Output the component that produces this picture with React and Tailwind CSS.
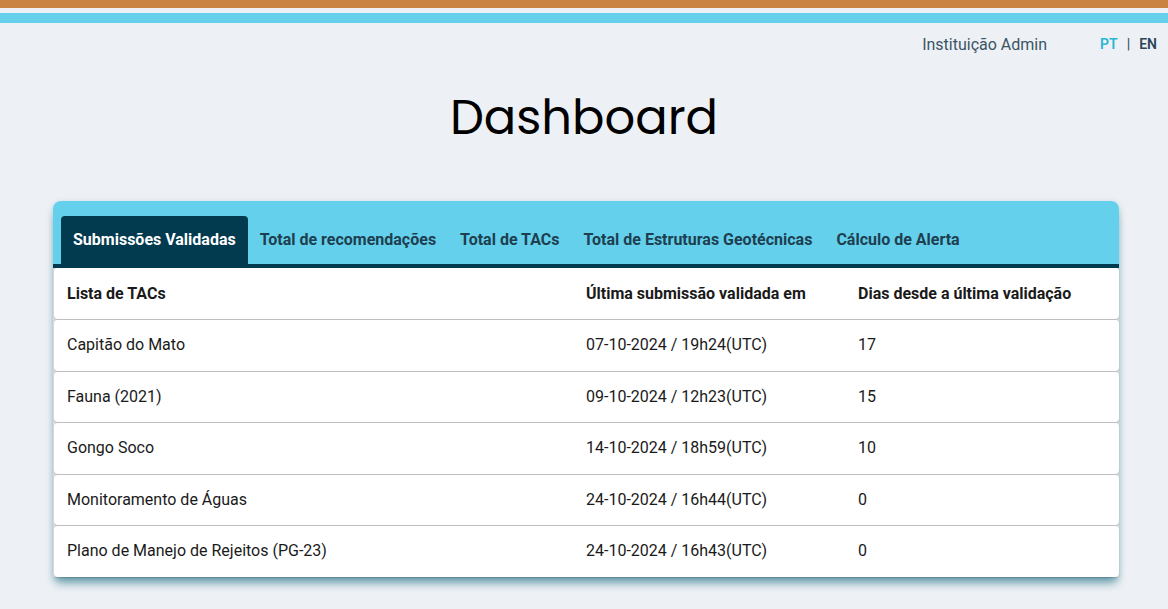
import React from "react";

const rows = [
  ["Capitão do Mato", "07-10-2024 / 19h24(UTC)", "17"],
  ["Fauna (2021)", "09-10-2024 / 12h23(UTC)", "15"],
  ["Gongo Soco", "14-10-2024 / 18h59(UTC)", "10"],
  ["Monitoramento de Águas", "24-10-2024 / 16h44(UTC)", "0"],
  ["Plano de Manejo de Rejeitos (PG-23)", "24-10-2024 / 16h43(UTC)", "0"],
];

const tabs = [
  "Total de recomendações",
  "Total de TACs",
  "Total de Estruturas Geotécnicas",
  "Cálculo de Alerta",
];

export default function App() {
  return (
    <div className="min-h-screen bg-[#edf1f5] font-['Roboto',sans-serif]">
      <div className="h-2 bg-[#ca8343]" />
      <div className="h-[5px]" />
      <div className="h-[10px] bg-[#64d0ec]" />
      <div className="flex h-[43px] items-center justify-end pr-[11px]">
        <span className="text-[16px] text-[#3a5566]">Instituição Admin</span>
        <div className="ml-[53px] flex items-center gap-[9px] text-[14px] font-semibold">
          <span className="text-[#29b6d3]">PT</span>
          <span className="text-[#3a5566]">|</span>
          <span className="text-[#2a4556]">EN</span>
        </div>
      </div>
      <div className="h-[135px] pt-[22px]">
        <h1 className="text-center font-['Poppins','Open_Sans',sans-serif] text-[48px] leading-[60px] font-normal text-black">
          Dashboard
        </h1>
      </div>
      <div className="ml-[53px] w-[1066px] rounded-t-lg shadow-[0_9px_10px_-3px_rgba(30,110,130,0.6),0_2px_6px_rgba(30,110,130,0.25)]">
        <div className="flex rounded-t-lg bg-[#64d0ec] px-2 pt-[15px]">
          <div className="flex h-12 items-center rounded-t px-3 bg-[#023a4f] text-[16px] font-bold text-white">
            Submissões Validadas
          </div>
          {tabs.map((t) => (
            <div key={t} className="flex h-12 items-center px-3 text-[16px] font-bold text-[#1d3f50]">
              {t}
            </div>
          ))}
        </div>
        <div className="h-1 bg-[#023a4f]" />
        <div className="flex flex-col gap-px bg-[#dadada] pl-px text-[16px] text-[#1a1a1a]">
          <div className="flex h-[51px] items-center rounded bg-white pl-[13px] font-bold shadow-[0_1px_1px_rgba(0,0,0,0.14)]">
            <div className="w-[519px]">Lista de TACs</div>
            <div className="w-[272px]">Última submissão validada em</div>
            <div>Dias desde a última validação</div>
          </div>
          {rows.map((r) => (
            <div key={r[0]} className="flex h-[50.5px] items-center rounded bg-white pl-[13px] shadow-[0_1px_1px_rgba(0,0,0,0.14)]">
              <div className="w-[519px]">{r[0]}</div>
              <div className="w-[272px]">{r[1]}</div>
              <div>{r[2]}</div>
            </div>
          ))}
        </div>
      </div>
    </div>
  );
}
